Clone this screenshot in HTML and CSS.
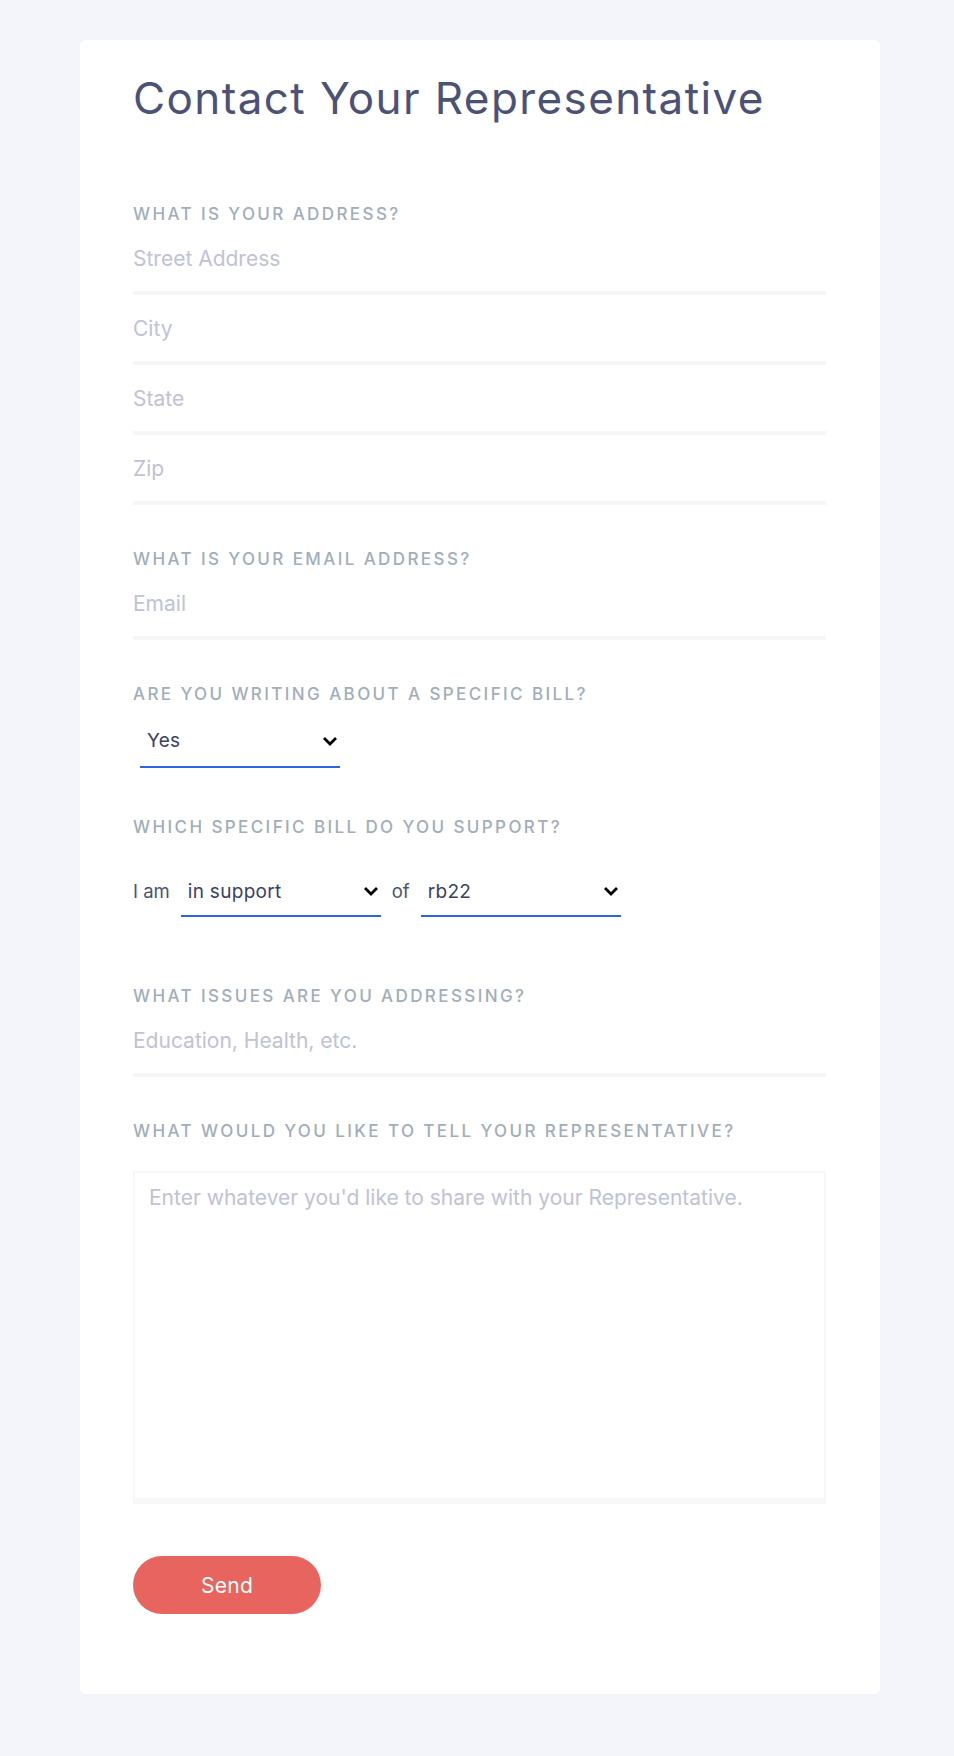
FILE: index.html
```html
<!DOCTYPE html>
<html lang="en">
<head>
<meta charset="utf-8">
<title>Contact Your Representative</title>
<link rel="stylesheet" href="styles.css">
</head>
<body>
<div class="page">
  <main class="card">
    <h1 class="title">Contact Your Representative</h1>

    <section class="section section-first">
      <label class="label">What is your address?</label>
      <input class="input" type="text" placeholder="Street Address">
      <input class="input" type="text" placeholder="City">
      <input class="input" type="text" placeholder="State">
      <input class="input" type="text" placeholder="Zip">
    </section>

    <section class="section">
      <label class="label">What is your email address?</label>
      <input class="input" type="email" placeholder="Email">
    </section>

    <section class="section">
      <label class="label">Are you writing about a specific bill?</label>
      <div class="select select-yes">
        <span class="select-value">Yes</span>
        <svg class="chevron" width="16" height="10" viewBox="0 0 16 10"><path d="M2 2 L8 8 L14 2" fill="none" stroke="#000" stroke-width="2.8"/></svg>
      </div>
    </section>

    <section class="section section-bill">
      <label class="label">Which specific bill do you support?</label>
      <div class="bill-row">
        <span class="row-text">I am</span>
        <div class="select select-row">
          <span class="select-value">in support</span>
          <svg class="chevron" width="16" height="10" viewBox="0 0 16 10"><path d="M2 2 L8 8 L14 2" fill="none" stroke="#000" stroke-width="2.8"/></svg>
        </div>
        <span class="row-text">of</span>
        <div class="select select-row">
          <span class="select-value">rb22</span>
          <svg class="chevron" width="16" height="10" viewBox="0 0 16 10"><path d="M2 2 L8 8 L14 2" fill="none" stroke="#000" stroke-width="2.8"/></svg>
        </div>
      </div>
    </section>

    <section class="section section-issues">
      <label class="label">What issues are you addressing?</label>
      <input class="input" type="text" placeholder="Education, Health, etc.">
    </section>

    <section class="section">
      <label class="label">What would you like to tell your Representative?</label>
      <textarea class="message" placeholder="Enter whatever you'd like to share with your Representative."></textarea>
    </section>

    <button class="send" type="button">Send</button>
  </main>
</div>
</body>
</html>
```

FILE: styles.css
```css
* {
  box-sizing: border-box;
}

html, body {
  margin: 0;
  padding: 0;
  background: #f3f5fa;
}

body {
  font-family: "Inter", "Liberation Sans", sans-serif;
}

.page {
  padding: 40px 0 62px 80px;
}

.card {
  width: 800px;
  background: #ffffff;
  border-radius: 6px;
  padding: 32px 54px 80px 53px;
  display: flex;
  flex-direction: column;
}

.title {
  margin: 0;
  font-size: 44px;
  font-weight: 400;
  line-height: 53px;
  color: #4b5275;
  letter-spacing: 1.4px;
}

.section {
  display: flex;
  flex-direction: column;
  margin-top: 43px;
}

.section-first {
  margin-top: 78px;
}

.label {
  display: block;
  font-size: 17px;
  font-weight: 500;
  line-height: 22px;
  text-transform: uppercase;
  letter-spacing: 2.4px;
  color: #a1adbb;
}

.input {
  display: block;
  width: 100%;
  height: 70px;
  margin: 0;
  padding: 0;
  border: none;
  border-bottom: 4px solid #f6f6f8;
  background: transparent;
  font-family: "Inter", "Liberation Sans", sans-serif;
  font-size: 21px;
  color: #3d4266;
  outline: none;
}

.input::placeholder {
  color: #c0c2d6;
  opacity: 1;
}

.select {
  display: flex;
  align-items: center;
  justify-content: space-between;
  width: 200px;
  border-bottom: 2px solid #2f66e0;
  color: #3b4065;
  letter-spacing: 0.3px;
}

.select-yes {
  height: 53px;
  margin: 10px 0 0 7px;
  padding: 0 2px 0 7px;
  font-size: 19px;
}

.section-bill {
  margin-top: 48px;
}

.bill-row {
  display: flex;
  align-items: center;
  gap: 11px;
  margin-top: 27px;
}

.row-text {
  font-size: 18.5px;
  color: #4b5275;
}

.select-row {
  height: 52px;
  padding: 2px 2px 0 7px;
  font-size: 19px;
}

.chevron {
  display: block;
  flex: none;
}

.section-issues {
  margin-top: 68px;
}

.message {
  display: block;
  width: 100%;
  height: 333px;
  margin: 29px 0 0;
  padding: 10px 14px;
  border: 2px solid #f8f8fa;
  border-bottom-width: 6px;
  resize: none;
  font-family: "Inter", "Liberation Sans", sans-serif;
  font-size: 21px;
  line-height: 30px;
  color: #3d4266;
  outline: none;
}

.message::placeholder {
  color: #c0c2d6;
  opacity: 1;
}

.send {
  align-self: flex-start;
  width: 188px;
  height: 58px;
  margin-top: 52px;
  border: none;
  border-radius: 29px;
  background: #e8645f;
  color: #ffffff;
  font-family: "Inter", "Liberation Sans", sans-serif;
  font-size: 21px;
  letter-spacing: 0.3px;
  cursor: pointer;
}
```
